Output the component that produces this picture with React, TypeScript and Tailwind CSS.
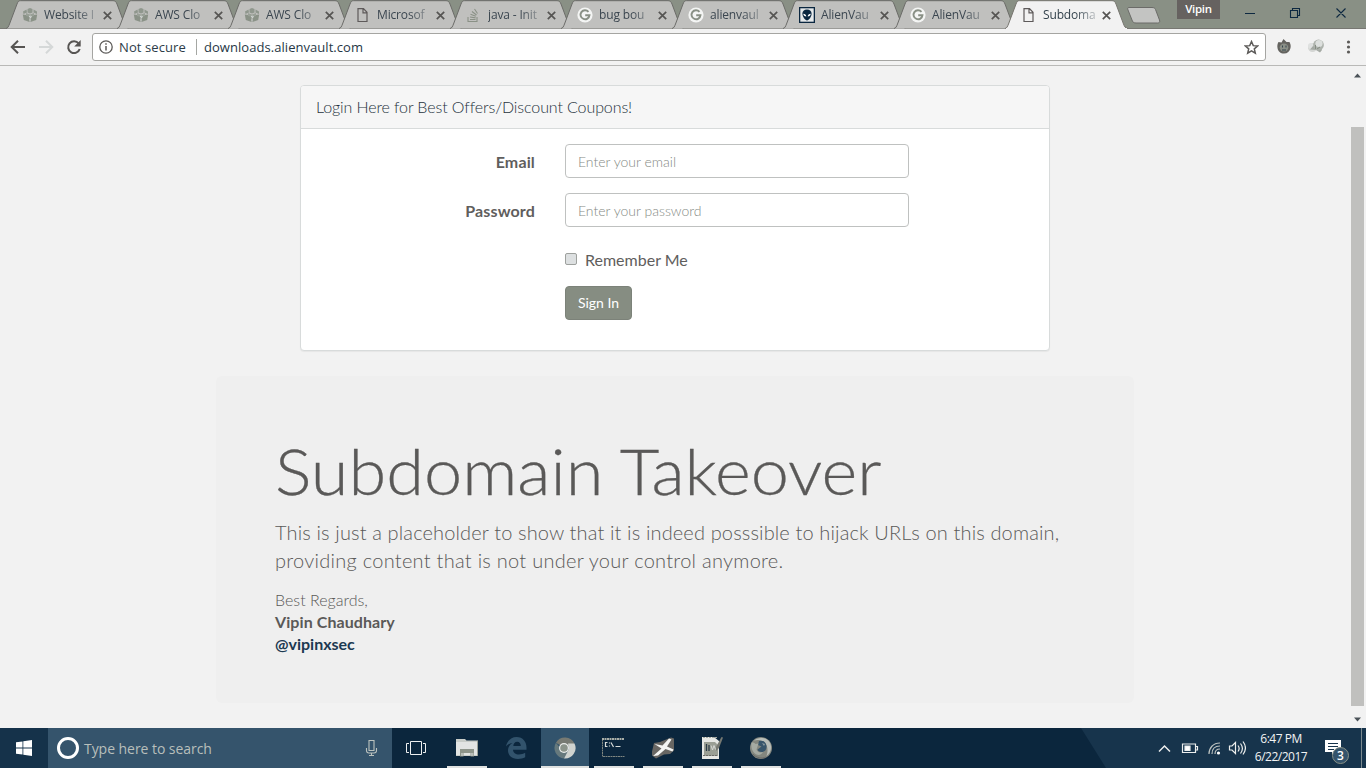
import type { ReactNode } from "react";

const ui = "font-['Open_Sans','Noto_Sans',sans-serif]";

function CubeIcon() {
  return (
    <svg width="16" height="16" viewBox="0 0 16 16">
      <path d="M1 4.500l3.500-2 .5 3-3.500 1.500zM5.500 2l2.500-1 2.500 1v3.500L8 6.500 5.500 5.500zM11.500 2.500l3.500 2v2.500l-3.500-1.500z" fill="#8f978d" />
      <path d="M.8 7.500l6.700 1V15L1.800 13zM8.500 8.500l6.700-1-1 5.500-5.700 2z" fill="#8a9287" />
      <path d="M4 6l4 1.500L12 6v3l-4 1-4-1z" fill="#99a097" />
      <path d="M7 9.500l1.500-.5 1 1-1.500 1M8 12.500v1" stroke="#d8dcda" fill="none" />
    </svg>
  );
}

function DocIcon() {
  return (
    <svg width="16" height="16" viewBox="0 0 16 16" fill="none" stroke="#5e5a5a" strokeWidth="1.200">
      <path d="M3 1.600h5.500l3.500 3.700v9.200h-9zM8 1.600v4.200h4" />
    </svg>
  );
}

function StackIcon() {
  return (
    <svg width="16" height="16" viewBox="0 0 16 16" fill="none" stroke="#8a9186" strokeWidth="1.100">
      <path d="M2 10v4.500h9V10M4 12.500h5.500M4 10l5.600.9M4.500 7.300l5.300 2M6 4.500l4.500 3.500M8.500 2l3 4.500" />
    </svg>
  );
}

function GoogleIcon() {
  return (
    <svg width="16" height="16" viewBox="0 0 16 16">
      <circle cx="8" cy="8" r="7.600" fill="#f4f5f4" />
      <path d="M11.500 4.900A4.500 4.500 0 1 0 12.500 8.200H8.200" fill="none" stroke="#899085" strokeWidth="1.900" />
    </svg>
  );
}

function AlienIcon() {
  return (
    <svg width="16" height="16" viewBox="0 0 16 16">
      <path d="M0 0h16v16H0z" fill="#0b2740" />
      <path d="M1.300 1.300h13.400v13.400H1.300z" fill="#e6e9ea" />
      <path d="M8 2.600c3 0 4.600 1.700 4.600 4.200 0 2.900-2.700 6.600-4.600 6.600S3.400 9.700 3.400 6.800C3.400 4.300 5 2.600 8 2.600z" fill="#0b2740" />
      <path d="M4.300 6.700c1.700 0 2.800 1 3 2.700-1.700 0-2.900-1-3-2.700zM11.700 6.700c-1.700 0-2.800 1-3 2.700 1.700 0 2.900-1 3-2.700z" fill="#fff" />
    </svg>
  );
}

const tabs: { title: string; icon: ReactNode }[] = [
  { title: "Website I", icon: <CubeIcon /> },
  { title: "AWS Clo", icon: <CubeIcon /> },
  { title: "AWS Clo", icon: <CubeIcon /> },
  { title: "Microsof", icon: <DocIcon /> },
  { title: "java - Init", icon: <StackIcon /> },
  { title: "bug bou", icon: <GoogleIcon /> },
  { title: "alienvaul", icon: <GoogleIcon /> },
  { title: "AlienVau", icon: <AlienIcon /> },
  { title: "AlienVau", icon: <GoogleIcon /> },
  { title: "Subdoma", icon: <DocIcon /> },
];

function Tab({ title, icon, active }: { title: string; icon: ReactNode; active: boolean }) {
  return (
    <div className={`relative -mr-[12px] h-[29px] w-[123px] shrink-0 ${active ? "z-10" : ""}`}>
      <svg className="absolute inset-0" width="123" height="29" viewBox="0 0 123 29">
        <path
          d="M0 28.500C2 28 2.500 26.500 3.500 24L11 4C12 1.500 12.500.7 14.500.7H107C109 .7 110 1.500 111 4l7.500 20c1 2.500 1.500 4 4.500 4.500"
          fill={active ? "#f2f2f2" : "#c0c0be"}
          stroke={active ? "#77756f" : "#6b6b68"}
          strokeWidth="1"
        />
        {active && <path d="M1 28.500h121" stroke="#f2f2f2" />}
      </svg>
      <div className="relative flex h-full items-center pl-[16px] pt-px">
        <span className="size-4 shrink-0">{icon}</span>
        <span
          className={`ml-[6px] w-[53px] whitespace-nowrap text-[12px] leading-4 tracking-[-0.150px] [mask-image:linear-gradient(to_right,#000_60%,rgba(0,0,0,0.25))] ${active ? "text-[#33424c]" : "text-[#3b4650]"}`}
        >
          {title}
        </span>
        <svg className="ml-[5.500px]" width="9" height="9" viewBox="0 0 9 9">
          <path d="M.8.8l7.400 7.400M8.200.8L.8 8.200" stroke="#565553" strokeWidth="1.700" />
        </svg>
      </div>
    </div>
  );
}

function TabStrip() {
  return (
    <div className="flex h-[29px] border-b border-[#777772] bg-[#899085] pl-[6px]">
      <div className="flex h-[29px]">
        {tabs.map((t, i) => (
          <Tab key={i} title={t.title} icon={t.icon} active={i === 9} />
        ))}
      </div>
      <svg className="ml-[10px] mt-[6px]" width="36" height="19" viewBox="0 0 36 19">
        <path d="M3 1.500h23c2 0 3 .7 3.500 2l4 10.500c.7 2-.2 3-2 3H10c-2 0-3-.7-3.600-2L2 4C1.400 2.500 1.500 1.500 3 1.500z" fill="#c3c4c2" stroke="#6b6b68" />
      </svg>
      <div className="ml-[15px] flex h-[19px] w-[43px] items-center justify-center bg-[#666260] pb-px text-[11.500px] font-semibold tracking-[-0.300px] text-white">
        Vipin
      </div>
      <svg className="ml-[25px] mt-[5px]" width="101" height="18" viewBox="0 0 101 18" fill="none" stroke="#0d2840" strokeWidth="1.100">
        <path d="M0 8.500h10M45.500 5.500h7v7h-7zM47.500 5.500v-2h7v7h-2M91.500 3.500l9 9M100.500 3.500l-9 9" />
      </svg>
    </div>
  );
}

function Toolbar() {
  return (
    <div className="flex h-[37px] items-center border-b border-[#b9b9b7] bg-[#f2f2f2]">
      <svg className="shrink-0" width="92" height="36" viewBox="0 0 92 36" fill="none" strokeWidth="2">
        <path d="M25 18H12M18 11.700L11.700 18l6.300 6.300" stroke="#575553" />
        <path d="M39 18h13M46 11.700l6.300 6.300-6.300 6.300" stroke="#d5d8d8" />
        <path d="M78.700 14.500A5.900 5.900 0 1 0 79.700 20" stroke="#575553" />
        <path d="M80.700 11v6.500h-6.500z" fill="#575553" stroke="none" />
      </svg>
      <div className="flex h-[28px] w-[1174px] items-center rounded-[3px] border border-[#a5a5a2] bg-white">
        <svg className="ml-[6px]" width="14" height="14" viewBox="0 0 14 14" fill="none" stroke="#5c5a58">
          <circle cx="7" cy="7" r="6.200" strokeWidth="1.300" />
          <path d="M7 6v4.500M7 3.300v1.500" strokeWidth="1.500" />
        </svg>
        <span className="ml-[6px] w-[68px] whitespace-nowrap pt-px text-[13px] tracking-[0.100px] text-[#2c3c48]">Not secure</span>
        <span className="ml-[9px] h-4 w-px bg-[#a5a7a3]" />
        <span className="ml-[7px] whitespace-nowrap pt-px text-[13px] tracking-[0.050px] text-[#263746]">downloads.alienvault.com</span>
        <svg className="ml-auto mr-[6px]" width="15" height="15" viewBox="0 0 24 24" fill="none" stroke="#5c5a58" strokeWidth="2.400">
          <path d="M12 2.500l2.800 6.500 7 .6-5.300 4.600 1.600 6.900L12 17.500l-6.100 3.600 1.600-6.900-5.300-4.600 7-.6z" />
        </svg>
      </div>
      <svg width="100" height="36" viewBox="1266 0 100 36">
        <path d="M1283.500 10l3 3 3 0c1 2 1.500 3.500 1 6-.7 3.500-3 5.500-6.500 5.500s-6-2-6.500-5.500c-.4-2.500 0-4.500 1-6l3 .5z" fill="#64635f" />
        <ellipse cx="1284" cy="18.500" rx="4.300" ry="4" fill="#8b9087" />
        <path d="M1282.500 16.500v2M1286 16.500v2M1282 21h4" stroke="#33424c" />
        <circle cx="1312.500" cy="18.500" r="4.500" fill="#d3d5d3" />
        <circle cx="1311" cy="17" r="3" fill="#dfe1e0" />
        <path d="M1310 20.500l6 .5 4 2.500 2-2.500-1-3-8-1z" fill="#a4a9a3" />
        <circle cx="1318.500" cy="16" r="5.400" fill="#adb2ac" />
        <circle cx="1319" cy="14.500" r="3.600" fill="#dde0de" />
        <path d="M1315.500 16v4M1317 20l3-2" stroke="#858c82" />
        <circle cx="1348.500" cy="13" r="1.600" fill="#5c5a58" />
        <circle cx="1348.500" cy="18" r="1.600" fill="#5c5a58" />
        <circle cx="1348.500" cy="23" r="1.600" fill="#5c5a58" />
      </svg>
    </div>
  );
}

function Field({ label, placeholder, type }: { label: string; placeholder: string; type: string }) {
  return (
    <div className="mb-[15px] flex h-[34px]">
      <label className="w-[234px] pt-[7px] text-right text-[16px] font-bold leading-[22px] tracking-[0.150px] text-[#5f5e5d]">{label}</label>
      <input
        type={type}
        placeholder={placeholder}
        className="ml-[30px] w-[344px] rounded-[4px] border border-[#bfc1c0] bg-white px-3 text-[14px] font-light text-[#555] outline-none placeholder:text-[#858a85]"
      />
    </div>
  );
}

function LoginPanel() {
  return (
    <section className="h-[266px] w-[750px] rounded-[4px] border border-[#d8dbdb] bg-white shadow-[0_1px_1px_rgba(0,0,0,0.05)]">
      <h3 className="h-[43px] rounded-t-[3px] border-b border-[#d8dbdb] bg-[#f6f6f6] px-[15px] py-[10px] text-[16px] font-light leading-[22px] tracking-[-0.100px] text-[#26333d]">
        Login Here for Best Offers/Discount Coupons!
      </h3>
      <form className="pt-[15px]">
        <Field label="Email" placeholder="Enter your email" type="email" />
        <Field label="Password" placeholder="Enter your password" type="password" />
        <label className="ml-[264px] mt-[22px] flex h-[22px] items-center text-[16px] leading-[22px] text-[#5f5e5d]">
          <span className="mb-[2px] mr-[8px] size-[12px] rounded-[2px] border border-[#9ea19e] bg-[#dde0e1]" />
          Remember Me
        </label>
        <button type="button" className="ml-[264px] mt-[15px] h-[34px] w-[67px] rounded-[4px] border border-[#7c8279] bg-[#868d82] pb-px text-[14px] text-white">
          Sign In
        </button>
      </form>
    </section>
  );
}

function Jumbotron() {
  return (
    <section className="mt-[25px] h-[327px] w-[918px] rounded-[6px] bg-[#efefef] px-[59px] pt-[60px] text-[#5a5958]">
      <h1 className="origin-left scale-x-[1.087] whitespace-nowrap text-[63px] font-light leading-[69px] [-webkit-text-stroke:0.300px_#5a5958]">Subdomain Takeover</h1>
      <p className="mt-[13px] whitespace-nowrap text-[20px] font-light leading-[28px] tracking-[0.140px]">
        This is just a placeholder to show that it is indeed posssible to hijack URLs on this domain,
        <br />
        <span className="tracking-[0.270px]">providing content that is not under your control anymore.</span>
      </p>
      <p className="mt-[15px] text-[16px] leading-[22px]">
        <span className="font-light">Best Regards,</span>
        <br />
        <b className="tracking-[0.080px]">Vipin Chaudhary</b>
        <br />
        <b className="text-[#1c3951]">@vipinxsec</b>
      </p>
    </section>
  );
}

function Scrollbar() {
  return (
    <div className="flex w-[16px] flex-col items-center bg-[#f2f2f2] pr-[2px]">
      <svg className="mt-[7px]" width="7" height="5" viewBox="0 0 7 5">
        <path d="M0 4.500L3.500.5 7 4.500z" fill="#4b5258" />
      </svg>
      <div className="mt-[49px] h-[579px] w-[13px] bg-[#c0c0be]" />
      <svg className="mt-[11px]" width="7" height="5" viewBox="0 0 7 5">
        <path d="M0 .5L3.500 4.500 7 .5z" fill="#4b5258" />
      </svg>
    </div>
  );
}

function FolderIcon() {
  return (
    <svg width="24" height="24" viewBox="0 0 24 24">
      <path d="M1 3h9l1.500 1.500H23V20H1z" fill="#c9cdc9" />
      <path d="M1 6h21v13H1z" fill="#e2e4e3" />
      <path d="M22.500 5v15" stroke="#9aa198" />
      <path d="M5 20.500V13h14v7.500h-3.500V17h-7v3.500z" fill="#8d948a" />
      <path d="M6 20v-3h2.500v3zM16 20v-3h2.500v3z" fill="#b9beb9" />
    </svg>
  );
}

function EdgeIcon() {
  return (
    <svg width="24" height="24" viewBox="0 0 24 24" fill="#32536c">
      <path d="M2 10.500C3 5 7 1 12.500 1 19 1 22.500 6 22.500 11.500v2.200H9c.2 3 2.500 4.800 6 4.800 2.300 0 4.300-.6 6.200-1.700v4.500C19 22.500 16.700 23 14 23 7.500 23 4 19 4 14.500c0-3.300 1.800-6 4.500-7.500C6 7.300 3.800 8.300 2 10.500zM9.300 10h7.500c0-2.600-1.300-4.200-3.600-4.200S9.500 7.500 9.300 10z" />
    </svg>
  );
}

function ChromeIcon() {
  return (
    <svg width="24" height="24" viewBox="0 0 24 24">
      <path d="M12 12L2.900 6.700A10.500 10.500 0 0 1 21.500 7.500z" fill="#777a73" />
      <path d="M2.900 6.700A10.500 10.500 0 0 0 11 22.500l4.500-8-7-1z" fill="#66797d" />
      <path d="M21.500 7.500A10.500 10.500 0 0 1 11 22.500l5-9.500-1-5.500z" fill="#d0d3cf" />
      <circle cx="11" cy="12" r="5" fill="#eceeed" />
      <circle cx="11" cy="12" r="3.800" fill="#8b948b" />
    </svg>
  );
}

function ConsoleIcon() {
  return (
    <svg width="24" height="24" viewBox="0 0 24 24" fill="none">
      <path d="M.5 3.500v17h22" stroke="#7e8580" strokeDasharray="2 .5" />
      <path d="M0 3h22.500" stroke="#a9aea8" strokeWidth="2" strokeDasharray="2 .5" />
      <path d="M5.500 6.500H3.500v4h2M7.500 6.500v1M7.500 9.500v1M9 6.500l2.500 4.500M13.500 10.500h5" stroke="#d8dcda" strokeWidth="1.200" />
    </svg>
  );
}

function CrossIcon() {
  return (
    <svg width="24" height="24" viewBox="0 0 24 24">
      <path d="M3 7l6-1 11-4.500 3 1v12l-4 3.500-6 .5-8 4-4-3v-4z" fill="#686663" />
      <path d="M3.500 8l8 1.500L18 2.500l2.500 1-4.500 7 6.500 3-1 2-7-2.500L7 19.500l-5 .5 8.500-7.500z" fill="#f4f5f4" />
    </svg>
  );
}

function NotepadIcon() {
  return (
    <svg width="24" height="24" viewBox="0 0 24 24">
      <path d="M2 1h12l5 4v18H2z" fill="#e6e8e5" />
      <path d="M4 6h11l3 3v11H4z" fill="#9a9f95" />
      <path d="M6.500 8v7M9 9v6" stroke="#2b3c48" strokeWidth="1.300" />
      <path d="M11 9.500l1.500 4.500L14 9.500l1.500 4" stroke="#d5d8d5" fill="none" />
      <path d="M3 1.500h14" stroke="#a5aaa2" strokeDasharray="2 1" />
      <path d="M23 1.500L21.500 1l-5.500 10v4l3-3z" fill="#777a73" />
      <path d="M3 19.500h15" stroke="#6b6b68" strokeDasharray="2 1" />
    </svg>
  );
}

function FirefoxIcon() {
  return (
    <svg width="24" height="24" viewBox="0 0 24 24">
      <circle cx="12" cy="12" r="11" fill="#84877f" />
      <path d="M5 4.500C9 1 17 1 20.500 6c3 5 1.500 11-3 14 2-5 1-11-2-14-4-2.500-8-2.500-10.500-1.500z" fill="#b9beb9" />
      <path d="M10 5c4-1 7 1 7.500 5 .3 3-1 5.500-4 6-3 .4-4.500-1-5-2.500l4-3-3.500-1.500z" fill="#38566c" />
      <path d="M2.500 6.500c2 0 3 0 4 1.500l3-.5-1 3-1 3c1 3 4 3.500 6.500 2.500-1.500 2.500-4 3.500-6.500 2.500C4 17 1.500 12 2.500 6.500z" fill="#a5aaa2" />
      <path d="M13 7l3 1-1 2z" fill="#8a9a9f" />
      <path d="M4 18c3 4 9 5 13 3" stroke="#6b6b68" fill="none" />
    </svg>
  );
}

const apps: { icon: ReactNode; state: "idle" | "open" | "active" }[] = [
  { icon: <FolderIcon />, state: "open" },
  { icon: <EdgeIcon />, state: "idle" },
  { icon: <ChromeIcon />, state: "active" },
  { icon: <ConsoleIcon />, state: "open" },
  { icon: <CrossIcon />, state: "open" },
  { icon: <NotepadIcon />, state: "open" },
  { icon: <FirefoxIcon />, state: "open" },
];

const slot = {
  idle: "",
  open: "",
  active: "bg-[#32536c]",
};
const bar = {
  idle: "invisible w-[40px]",
  open: "w-[40px]",
  active: "w-[48px]",
};

function Taskbar() {
  return (
    <footer className="flex h-[40px] bg-[#0b263d]">
      <div className="flex w-[48px] items-center justify-center bg-[#15324a]">
        <svg width="16" height="16" viewBox="0 0 16 16" fill="#fff">
          <path d="M0 2.300l6.500-.9v6.100H0zM7.300 1.300L16 0v7.500H7.300zM0 8.400h6.500v6.200L0 13.700zM7.300 8.400H16V16l-8.700-1.200z" />
        </svg>
      </div>
      <div className="flex w-[344px] items-center bg-[#35546c]">
        <span className="ml-[9px] size-[22px] rounded-full border-[3px] border-white" />
        <span className="ml-[5px] text-[14px] tracking-[-0.050px] text-[#b8bfbb]">Type here to search</span>
        <svg className="ml-auto mr-[14px]" width="13" height="18" viewBox="0 0 13 18" fill="none" stroke="#bcc3bf" strokeWidth="1.100">
          <path d="M4 1.500h5v10H4zM1.500 9v2.500c0 1.500 1 2.500 2.500 2.500h5c1.500 0 2.500-1 2.500-2.500V9M6.500 14v2M4 16.500h5" />
        </svg>
      </div>
      <div className="flex w-[48px] items-center justify-center">
        <svg width="20" height="16" viewBox="0 0 20 16" fill="none" stroke="#eef0f1">
          <path d="M4.500 1.500h11v13h-11zM3 3.500H.5v9H3M17 3.500h2.500v9H17" />
        </svg>
      </div>
      <div className="ml-[3px] flex gap-px">
        {apps.map((a, i) => (
          <div key={i} className={`flex w-[48px] flex-col items-center ${slot[a.state]}`}>
            <div className="flex h-[38px] items-center pt-px">{a.icon}</div>
            <div className={`h-[2px] bg-[#dfe1e0] ${bar[a.state]}`} />
          </div>
        ))}
      </div>
      <svg className="ml-auto" width="25" height="40" viewBox="0 0 25 40">
        <path d="M0 0l25 40V0z" fill="#17344c" />
      </svg>
      <div className="flex w-[260px] items-center bg-[#17344c]">
        <svg className="ml-[52px] shrink-0" width="88" height="40" viewBox="1158 0 88 40" fill="none" stroke="#eceeed" strokeWidth="1.200">
          <path d="M1159 23.500l5.500-5.500 5.500 5.500" strokeWidth="1.500" />
          <path d="M1182.500 16h13v8.500h-13zM1196 18.500h1.500v3.500h-1.500" />
          <path d="M1185 18h5v4.500h-5z" fill="#fff" />
          <path d="M1209 26c0-6 4-11 11-11M1212 26c0-5 3-8 8-8M1215 26c0-3 2-5 5-5" stroke="#bcc2c0" />
          <circle cx="1218.500" cy="25" r="1.600" fill="#fff" stroke="none" />
          <path d="M1229.500 18h2.500l3.500-3.500v11L1232 22h-2.500zM1238 17.500c1.300 1.700 1.300 4.300 0 6M1240.500 15.500c2.300 3 2.300 7 0 10M1243 13.500c3 4 3 9 0 13" />
        </svg>
        <div className="w-[70px] text-center text-[12px] leading-[18px] tracking-[-0.500px] text-[#f2f3f3]">
          6:47 PM
          <br />
          6/22/2017
        </div>
        <div className="relative ml-[8px] h-[40px] w-[28px]">
          <svg width="20" height="30" viewBox="0 0 20 30" className="ml-px">
            <path d="M0 12h16v12h-6l-3 3v-3H0z" fill="#fff" />
            <path d="M3 15.500h10M3 18.500h10M3 21.500h6" stroke="#17344c" />
          </svg>
          <span className="absolute left-[8px] top-[19px] flex size-[17px] items-center justify-center rounded-full border border-[#899085] bg-[#35546c] text-[12px] font-semibold text-white">
            3
          </span>
        </div>
        <span className="ml-auto mr-[4px] h-full w-px bg-[#7c8a8f]" />
      </div>
    </footer>
  );
}

export default function App() {
  return (
    <div className={`flex h-[768px] w-[1366px] flex-col overflow-hidden bg-[#f2f2f2] ${ui}`}>
      <TabStrip />
      <Toolbar />
      <div className="flex h-[662px]">
        <main className="flex w-[1350px] flex-col items-center pt-[19px] font-['Lato',sans-serif]">
          <LoginPanel />
          <Jumbotron />
        </main>
        <Scrollbar />
      </div>
      <Taskbar />
    </div>
  );
}
